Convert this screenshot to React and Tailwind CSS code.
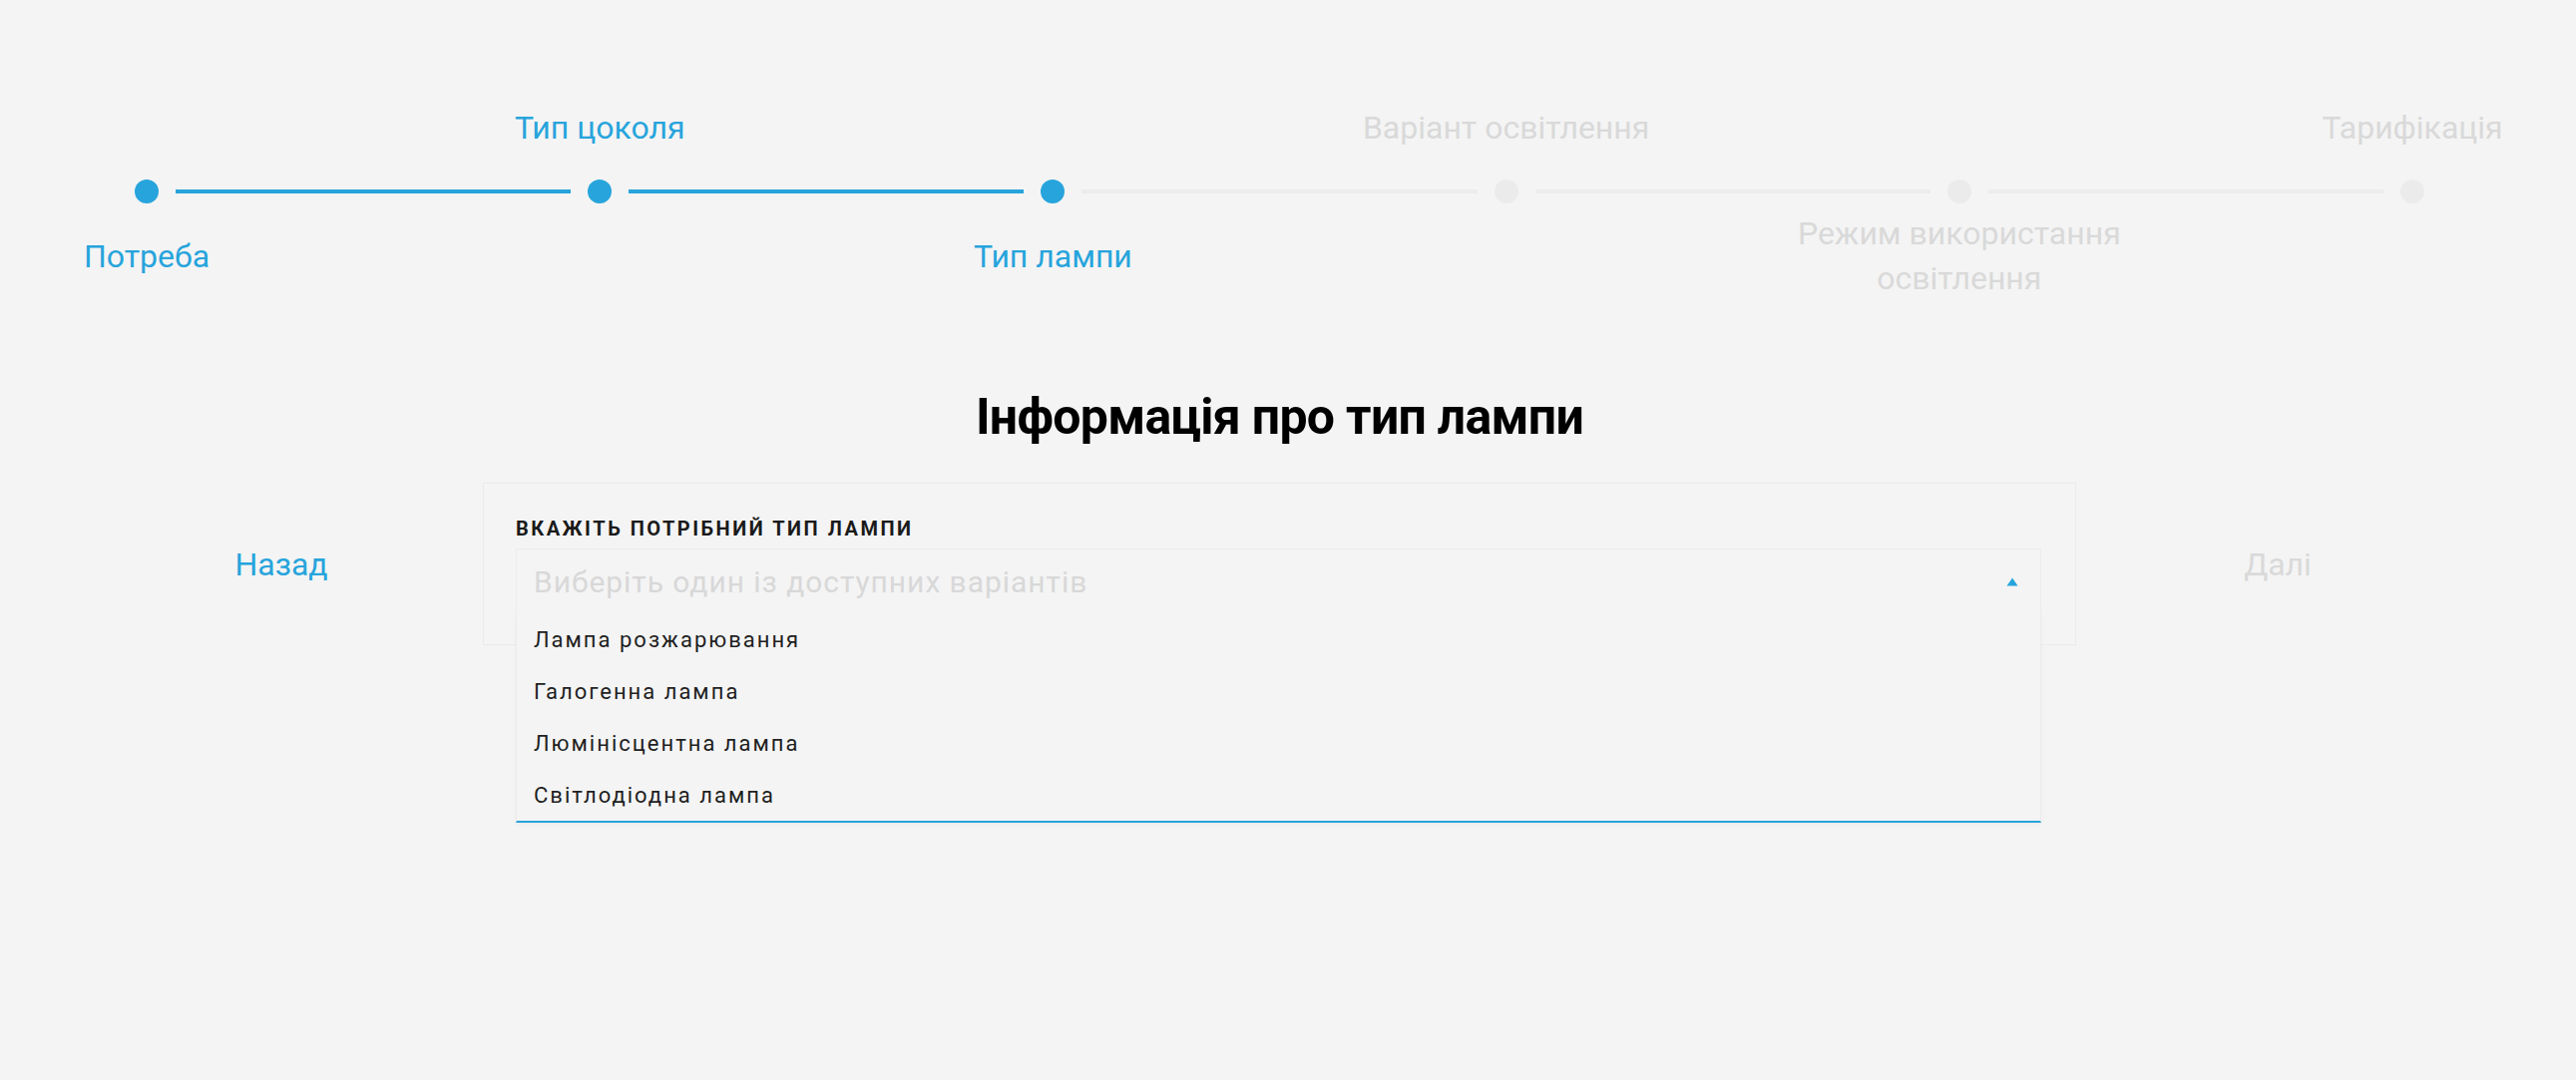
import { useState } from "react";

const steps = [
  { name: "Потреба", done: true, pos: "below" },
  { name: "Тип цоколя", done: true, pos: "above" },
  { name: "Тип лампи", done: true, pos: "below" },
  { name: "Варіант освітлення", done: false, pos: "above" },
  { name: "Режим використання освітлення", done: false, pos: "below" },
  { name: "Тарифікація", done: false, pos: "above" },
];

const options = [
  "Лампа розжарювання",
  "Галогенна лампа",
  "Люмінісцентна лампа",
  "Світлодіодна лампа",
];

function Step({ step }) {
  return (
    <div className="relative w-6 h-6 shrink-0">
      <div
        className={`w-6 h-6 rounded-full ${step.done ? "bg-[#27a4dc]" : "bg-[#ebebeb]"}`}
      />
      {/* Label */}
      <div
        className={`absolute left-1/2 -translate-x-1/2 w-[350px] h-[90px] flex items-center justify-center text-center text-[32px] leading-[45px] ${
          step.pos === "above" ? "top-[-97px]" : "top-[32px]"
        } ${step.done ? "text-[#27a4dc]" : "text-[#d9d9d9]"}`}
      >
        {step.name}
      </div>
    </div>
  );
}

export default function App() {
  const [open] = useState(true);

  return (
    <div
      className="min-h-[1083px] w-full bg-[#f4f4f4]"
      style={{ fontFamily: "Roboto, 'Noto Sans', sans-serif" }}
    >
      <div className="w-[2565px] pt-[180px]">
        {/* Stepper */}
        <div className="flex items-center px-[135px]">
          {steps.map((step, i) => (
            <div key={step.name} className={`flex items-center ${i < steps.length - 1 ? "flex-1" : ""}`}>
              <Step step={step} />
              {i < steps.length - 1 && (
                <div
                  className={`flex-1 h-[4px] mx-[17px] ${
                    steps[i + 1].done ? "bg-[#27a4dc]" : "bg-[#ececec]"
                  }`}
                />
              )}
            </div>
          ))}
        </div>

        {/* Heading */}
        <h1 className="mt-[184px] text-center text-[50px] leading-[60px] font-bold text-black tracking-[-0.7px]">
          Інформація про тип лампи
        </h1>

        {/* Form row */}
        <div className="mt-[36px] flex items-center justify-center gap-[62px]">
          <button className="w-[280px] text-center text-[32px] text-[#27a4dc]">Назад</button>

          <div className="w-[1597px] border border-[#ebebeb] pt-[33px] pr-[34px] pb-[31px] pl-[32px]">
            <div className="text-[20px] leading-[24px] font-bold tracking-[2.5px] text-[#1a1a1a] uppercase">
              Вкажіть потрібний тип лампи
            </div>
            <div className="relative mt-[8px]">
              <div className="h-[65px] flex items-center justify-between pl-[17px] pr-[22px] border border-b-0 border-[#ececec]">
                <span className="text-[30px] text-[#d8d8d8] tracking-[0.95px]">
                  Виберіть один із доступних варіантів
                </span>
                <svg width="12" height="9" viewBox="0 0 12 9">
                  <path d="M6 0.5 L11.5 8.5 L0.5 8.5 Z" fill="#27a4dc" />
                </svg>
              </div>
              {open && (
                <ul className="absolute left-0 right-0 top-full z-10 bg-[#f4f4f4] border-x border-[#ececec] border-b-2 border-b-[#27a4dc] shadow-[0_2px_4px_rgba(0,0,0,0.04)]">
                  {options.map((opt) => (
                    <li
                      key={opt}
                      className="h-[52px] flex items-center pl-[17px] text-[22px] tracking-[2px] text-[#1f1f1f]"
                    >
                      {opt}
                    </li>
                  ))}
                </ul>
              )}
            </div>
          </div>

          <button className="w-[280px] text-center text-[32px] text-[#d9d9d9]">Далі</button>
        </div>
      </div>
    </div>
  );
}
